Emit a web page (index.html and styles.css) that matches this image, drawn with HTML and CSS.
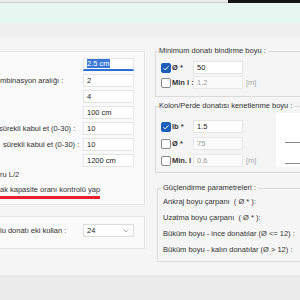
FILE: index.html
```html
<!DOCTYPE html>
<html lang="tr">
<head>
    <meta charset="UTF-8">
    <meta name="viewport" content="width=device-width, initial-scale=1.0">
    <title>Donatı Ayarları</title>
    <link rel="stylesheet" href="styles.css">
</head>
<body>

    <div class="titlebar"><div class="titlebar-dark"></div></div>
    <div class="ribbon"></div>
    <div class="tabs"></div>

    <div class="main">
        <div class="left">
            <div class="panel panel-main">
                <div class="row"><span class="lbl"></span><span class="field focus"><span class="sel">2.5 cm</span></span></div>
                <div class="row"><span class="lbl">mbinasyon aralığı :</span><span class="field">2</span></div>
                <div class="row"><span class="lbl"></span><span class="field">4</span></div>
                <div class="row"><span class="lbl"></span><span class="field">100 cm</span></div>
                <div class="row"><span class="lbl lbl-back">sürekli kabul et (0-30) :</span><span class="field">10</span></div>
                <div class="row"><span class="lbl lbl-fwd">sürekli kabul et (0-30) :</span><span class="field">10</span></div>
                <div class="row"><span class="lbl"></span><span class="field">1200 cm</span></div>
                <div class="note note-first">ru L/2</div>
                <div class="note note-second"><span class="warn">ak kapasite oranı kontrolü yap</span></div>
            </div>

            <div class="panel panel-splice">
                <div class="row">
                    <span class="lbl">lu donatı eki kullan :</span>
                    <span class="field combo">24
                        <svg class="chevron" width="6" height="4" viewBox="0 0 6 4"><path d="M0.5 0.5 L3 3 L5.5 0.5" fill="none" stroke="#9a9a9a" stroke-width="0.8"/></svg>
                    </span>
                </div>
            </div>
        </div>

        <div class="right">
            <!-- Minimum bindirme -->
            <fieldset class="group g-min">
                <legend>Minimum donatı bindirme boyu :</legend>
                <div class="check-row">
                    <span class="box on"><svg width="10" height="10" viewBox="0 0 10 10"><path d="M2.5 5.2 L4.2 6.9 L7.6 3.3" fill="none" stroke="#fff" stroke-width="1"/></svg></span>
                    <span class="check-label">Ø *</span>
                    <span class="field">50</span>
                </div>
                <div class="check-row">
                    <span class="box"></span>
                    <span class="check-label">Min l :</span>
                    <span class="field off">1.2</span>
                    <span class="unit">[m]</span>
                </div>
            </fieldset>

            <!-- Kenetlenme -->
            <fieldset class="group g-anchor">
                <legend>Kolon/Perde donatısı kenetlenme boyu :</legend>
                <div class="anchor-body">
                    <div class="rows">
                        <div class="check-row">
                            <span class="box on"><svg width="10" height="10" viewBox="0 0 10 10"><path d="M2.5 5.2 L4.2 6.9 L7.6 3.3" fill="none" stroke="#fff" stroke-width="1"/></svg></span>
                            <span class="check-label">lb *</span>
                            <span class="field">1.5</span>
                        </div>
                        <div class="check-row">
                            <span class="box"></span>
                            <span class="check-label">Ø *</span>
                            <span class="field off">75</span>
                        </div>
                        <div class="check-row">
                            <span class="box"></span>
                            <span class="check-label">Min. l</span>
                            <span class="field off">0.6</span>
                            <span class="unit">[m]</span>
                        </div>
                    </div>
                    <div class="preview">
                        <svg width="30" height="54" viewBox="0 0 30 54">
                            <line x1="9" y1="29.5" x2="30" y2="29.5" stroke="#8c8c8c" stroke-width="1"/>
                            <line x1="9" y1="50.5" x2="30" y2="50.5" stroke="#8c8c8c" stroke-width="1"/>
                        </svg>
                    </div>
                </div>
            </fieldset>

            <!-- Güçlendirme -->
            <fieldset class="group g-strength">
                <legend>Güçlendirme parametreleri :</legend>
                <div class="param">Ankraj boyu çarpanı &nbsp;( Ø * ):</div>
                <div class="param">Uzatma boyu çarpanı &nbsp;( Ø * ):</div>
                <div class="param">Büküm boyu - ince donatılar (Ø &lt;= 12) :</div>
                <div class="param">Büküm boyu - kalın donatılar (Ø &gt; 12) :</div>
            </fieldset>
        </div>
    </div>

    <div class="footer"></div>

</body>
</html>
```

FILE: styles.css
```css
body {
    margin: 0;
    padding: 0;
    width: 300px;
    height: 300px;
    overflow: hidden;
    font-family: "Liberation Sans", Arial, sans-serif;
    font-size: 7.5px;
    color: #333;
    background-color: #f5f5f5;
}

/* Window top */
.titlebar {
    height: 2px;
    background-color: #e9e9e9;
    border-bottom: 1px solid #cfcfcf;
    display: flex;
    justify-content: flex-end;
}

.titlebar-dark {
    width: 72px;
    height: 3px;
    background-color: #151515;
}

.ribbon {
    height: 20px;
    background-color: #e6f7f1;
}

.tabs {
    height: 15px;
    background-color: #efefef;
}

.main {
    display: flex;
    align-items: flex-start;
    height: 237px;
    padding-top: 8px;
    box-sizing: border-box;
}

.footer {
    height: 25px;
    background-color: #ebebeb;
}

/* Left column */
.left {
    width: 145px;
    flex: none;
    margin-top: 5px;
}

.panel {
    background-color: #fafafa;
    border: 1px solid #e3e3e3;
    border-left: none;
    box-sizing: border-box;
}

.panel-main {
    height: 154px;
    padding-top: 6px;
}

.panel-splice {
    height: 33px;
    margin-top: 11px;
    padding-top: 7px;
}

.row {
    display: flex;
    align-items: center;
    height: 13px;
    margin-bottom: 3px;
}

.lbl {
    width: 83px;
    flex: none;
    white-space: nowrap;
    overflow: hidden;
}

.lbl-back {
    text-indent: -1px;
}

.lbl-fwd {
    text-indent: 3px;
}

.field {
    display: block;
    width: 51px;
    height: 13px;
    flex: none;
    box-sizing: border-box;
    border: 1px solid #e4e4e4;
    background-color: #fff;
    padding-left: 3px;
    line-height: 11px;
    color: #222;
    white-space: nowrap;
}

.field.focus {
    border-bottom: 2px solid #2a6fd2;
    line-height: 10px;
}

.sel {
    background-color: #3b78d6;
    color: #fff;
}

.field.off {
    color: #9c9c9c;
    background-color: #fafafa;
    border-color: #e8e8e8;
}

.combo {
    display: flex;
    align-items: center;
    justify-content: space-between;
    padding-right: 4px;
    border-color: #dcdcdc;
}

.note {
    height: 10px;
    line-height: 10px;
    white-space: nowrap;
}

.note-first {
    margin-top: 3px;
}

.note-second {
    margin-top: 5px;
}

.warn {
    display: inline-block;
    line-height: 10px;
    padding-bottom: 1px;
    border-bottom: 3px solid #e8202c;
}

/* Right column */
.right {
    width: 200px;
    flex: none;
    margin-left: 10px;
}

.group {
    margin: 0;
    border: 1px solid #dadada;
    padding: 0 0 0 3px;
    min-width: 0;
}

.group legend {
    padding: 0 2px 0 0;
    line-height: 10px;
    white-space: nowrap;
}

.g-min {
    padding-top: 5px;
    padding-bottom: 7px;
}

.g-min .check-row + .check-row {
    margin-top: 2px;
}

.g-anchor {
    margin-top: 4px;
    padding-top: 2px;
    padding-bottom: 5px;
}

.anchor-body {
    display: flex;
    align-items: flex-start;
}

.rows {
    width: 117px;
    flex: none;
    padding-top: 7px;
}

.rows .check-row + .check-row {
    margin-top: 4px;
}

.preview {
    width: 30px;
    height: 54px;
    background-color: #fff;
}

.preview svg {
    display: block;
}

.check-row {
    display: flex;
    align-items: center;
    height: 13px;
}

.box {
    width: 10px;
    height: 10px;
    flex: none;
    margin-left: 2px;
    box-sizing: border-box;
    border: 1px solid #8a8a8a;
    border-radius: 2px;
    background-color: #fff;
}

.box.on {
    border-color: #1b5fb8;
    background-color: #1b5fb8;
}

.box svg {
    display: block;
    margin: -1px;
}

.check-label {
    width: 21px;
    flex: none;
    padding-left: 1px;
    font-weight: bold;
    white-space: nowrap;
}

.check-row .field {
    width: 50px;
}

.unit {
    margin-left: 3px;
    color: #a8a8a8;
}

.g-strength {
    margin-top: 10px;
    margin-left: 2px;
    padding-top: 1px;
    padding-bottom: 3px;
}

.g-strength legend {
    padding: 0 2px;
}

.param {
    height: 16px;
    line-height: 16px;
    padding-left: 2px;
    white-space: nowrap;
}
```
